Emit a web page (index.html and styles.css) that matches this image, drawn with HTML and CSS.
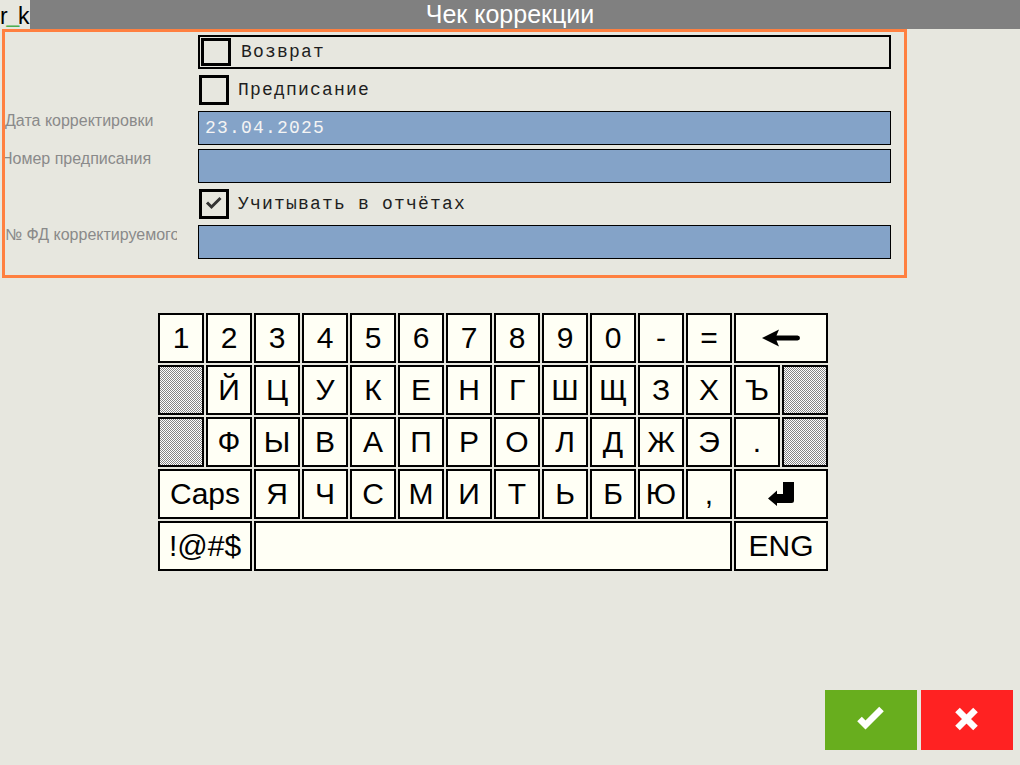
FILE: index.html
```html
<!DOCTYPE html>
<html lang="ru">
<head>
<meta charset="utf-8">
<title>Чек коррекции</title>
<link rel="stylesheet" href="styles.css">
</head>
<body>
<div class="app">
  <header class="titlebar">
    <div class="appname">r<span class="us">_</span>k</div>
    <div class="title">Чек коррекции</div>
    <div class="spacer"></div>
  </header>

  <section class="form">
    <div class="label"></div>
    <div class="field focus"><span class="check small"></span><span class="check-label">Возврат</span></div>

    <div class="label"></div>
    <div class="field"><span class="check"></span><span class="check-label">Предписание</span></div>

    <div class="label">Дата корректировки</div>
    <div class="field input">23.04.2025</div>

    <div class="label shift">Номер предписания</div>
    <div class="field input"></div>

    <div class="label"></div>
    <div class="field"><span class="check"><svg class="tick" viewBox="0 0 24 24"><polyline points="5,10.5 9.5,15 18.5,6" fill="none" stroke="#333" stroke-width="3"/></svg></span><span class="check-label">Учитывать в отчётах</span></div>

    <div class="label">№ ФД корректируемого</div>
    <div class="field input"></div>
  </section>

  <section class="keyboard">
    <div class="key">1</div><div class="key">2</div><div class="key">3</div><div class="key">4</div><div class="key">5</div><div class="key">6</div><div class="key">7</div><div class="key">8</div><div class="key">9</div><div class="key">0</div><div class="key">-</div><div class="key">=</div>
    <div class="key wide"><svg class="icon" width="38" height="18" viewBox="0 0 38 18"><path d="M0 9 L17 0.5 L14.5 6.5 H35.5 A2.5 2.5 0 0 1 35.5 11.5 H14.5 L17 17.5 Z" fill="#000"/></svg></div>

    <div class="key hatch"></div>
    <div class="key">Й</div><div class="key">Ц</div><div class="key">У</div><div class="key">К</div><div class="key">Е</div><div class="key">Н</div><div class="key">Г</div><div class="key">Ш</div><div class="key">Щ</div><div class="key">З</div><div class="key">Х</div><div class="key">Ъ</div>
    <div class="key hatch"></div>

    <div class="key hatch"></div>
    <div class="key">Ф</div><div class="key">Ы</div><div class="key">В</div><div class="key">А</div><div class="key">П</div><div class="key">Р</div><div class="key">О</div><div class="key">Л</div><div class="key">Д</div><div class="key">Ж</div><div class="key">Э</div><div class="key">.</div>
    <div class="key hatch"></div>

    <div class="key wide">Caps</div>
    <div class="key">Я</div><div class="key">Ч</div><div class="key">С</div><div class="key">М</div><div class="key">И</div><div class="key">Т</div><div class="key">Ь</div><div class="key">Б</div><div class="key">Ю</div><div class="key">,</div>
    <div class="key wide"><svg class="icon" width="26" height="24" viewBox="0 0 26 24"><path d="M15 0 H26 V18.5 Q26 21 23.5 21 H9 V24 L0 16.5 L9 8.5 V12 H15 Z" fill="#000"/></svg></div>

    <div class="key wide">!@#$</div>
    <div class="key space"></div>
    <div class="key wide">ENG</div>
  </section>

  <footer class="actions">
    <div class="btn ok"><svg width="92" height="60" viewBox="0 0 92 60"><polyline points="34.5,29 40.5,35 56.5,19" fill="none" stroke="#fff" stroke-width="6.5"/></svg></div>
    <div class="btn cancel"><svg width="92" height="60" viewBox="0 0 92 60"><path d="M36.5 20 L54.5 38 M54.5 20 L36.5 38" fill="none" stroke="#fff" stroke-width="6.5"/></svg></div>
  </footer>
</div>
</body>
</html>
```

FILE: styles.css
```css
body {
  margin: 0;
  background: #e7e7df;
  font-family: "Liberation Sans", Arial, sans-serif;
}

.app {
  width: 1020px;
  height: 765px;
  display: flex;
  flex-direction: column;
}

/* Title bar */
.titlebar {
  height: 29px;
  background: #808080;
  display: grid;
  grid-template-columns: 30px 1fr 30px;
}

.appname {
  background: #e7e7df;
  color: #000;
  font-size: 23px;
  letter-spacing: -1.2px;
  line-height: 29px;
  overflow: hidden;
  white-space: nowrap;
}

.appname .us {
  color: #4caf50;
  vertical-align: 2px;
}

.title {
  color: #fff;
  font-size: 25px;
  line-height: 29px;
  text-align: center;
}

/* Form */
.form {
  margin-left: 2px;
  width: 905px;
  height: 249px;
  box-sizing: border-box;
  border: 3px solid #ff8040;
  padding-top: 3px;
  display: grid;
  grid-template-columns: 178px 693px;
  column-gap: 15px;
  grid-auto-rows: 34px;
  row-gap: 4px;
  align-content: start;
}

.label {
  width: 172px;
  color: #8a8a8a;
  font-size: 16px;
  line-height: 19px;
  white-space: nowrap;
  overflow: hidden;
}

.label.shift {
  text-indent: -4px;
}

.field {
  display: flex;
  align-items: center;
  gap: 9px;
  box-sizing: border-box;
  font-family: "Liberation Mono", "Courier New", monospace;
  font-size: 18px;
  letter-spacing: 1.2px;
  color: #1e1e1e;
}

.field.focus {
  border: 2px solid #000;
  padding-left: 1px;
  gap: 10px;
}

.field.input {
  border: 1px solid #000;
  background: #84a3c8;
  color: #f4f4f4;
  padding-left: 6px;
}

.check {
  width: 30px;
  height: 30px;
  box-sizing: border-box;
  border: 3px solid #000;
  margin-left: 1px;
  flex: none;
  display: flex;
}

.check.small {
  height: 28px;
  margin-left: 0;
}

.tick {
  width: 24px;
  height: 24px;
}

/* Keyboard */
.keyboard {
  align-self: flex-start;
  margin: 35px 0 0 158px;
  display: grid;
  grid-template-columns: repeat(14, 46px);
  grid-auto-rows: 50px;
  gap: 2px;
}

.key {
  box-sizing: border-box;
  border: 2px solid #000;
  background: #fffff5;
  color: #000;
  font-size: 30px;
  display: flex;
  align-items: center;
  justify-content: center;
}

.key.wide {
  grid-column: span 2;
}

.key.space {
  grid-column: span 10;
}

.key.hatch {
  background: repeating-conic-gradient(#858585 0 25%, #ffffff 0 50%) 0 0 / 2px 2px;
}

.icon {
  display: block;
}

/* Bottom actions */
.actions {
  margin-top: auto;
  display: flex;
  justify-content: flex-end;
  gap: 4px;
  padding: 0 7px 15px 0;
}

.btn {
  width: 92px;
  height: 60px;
}

.btn svg {
  display: block;
}

.btn.ok {
  background: #68ae1e;
}

.btn.cancel {
  background: #ff2222;
}
```
